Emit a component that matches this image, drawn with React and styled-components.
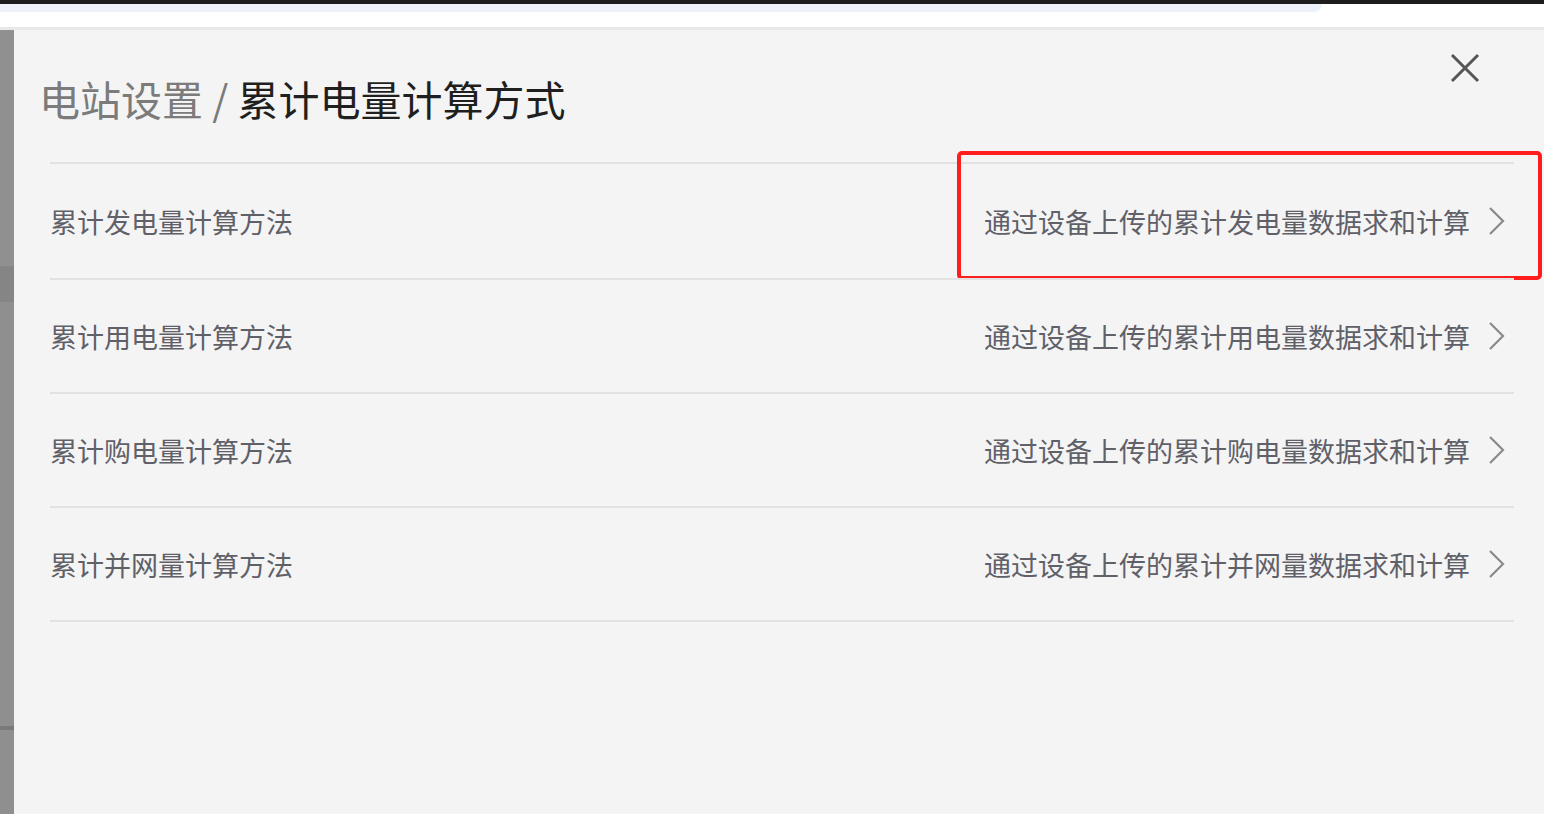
import React from "react";
import styled, { createGlobalStyle } from "styled-components";

const Global = createGlobalStyle`
    html, body {
        margin: 0;
        padding: 0;
        background: #ffffff;
        font-family: "Noto Sans CJK SC", "Noto Sans", sans-serif;
    }
`

const Page = styled.div`
    width: 1544px;
    height: 814px;
    display: flex;
    flex-direction: column;
    overflow: hidden;
`

const TopStrip = styled.div`
    height: 4px;
    background-color: #1d1d1d;
`

const Header = styled.div`
    height: 23px;
    background-color: #ffffff;
    border-bottom: 3px solid #e8e8e8;
`

const HeaderBand = styled.div`
    width: 1322px;
    height: 8px;
    background-color: #edf1f9;
    border-bottom-right-radius: 10px;
`

const Main = styled.div`
    flex: 1;
    display: flex;
`

const Rail = styled.div`
    width: 14px;
    display: flex;
    flex-direction: column;
    background-color: #8f8f8f;
`

const RailPart = styled.div`
    height: ${props => props.h}px;
    background-color: ${props => props.bg};
`

const Panel = styled.div`
    flex: 1;
    background-color: #f4f4f4;
    display: flex;
    flex-direction: column;
`

const TitleBar = styled.div`
    display: flex;
    justify-content: space-between;
    align-items: flex-start;
    padding: 23px 64px 0 25px;
`

const Title = styled.h2`
    margin: 21px 0 0;
    font-size: 41px;
    line-height: 48px;
    font-weight: 400;
    color: #1f1f1f;
`

const Crumb = styled.span`
    color: #7b7b7b;
`

const Close = styled.button`
    width: 30px;
    height: 30px;
    padding: 0;
    border: none;
    background: transparent;
    display: flex;
    align-items: center;
    justify-content: center;
`

const List = styled.div`
    margin: 40px 30px 0 36px;
    border-bottom: 2px solid #e2e2e2;
`

const Row = styled.div`
    position: relative;
    height: ${props => (props.$first ? 116 : 114)}px;
    box-sizing: border-box;
    border-top: 2px solid #e2e2e2;
    display: flex;
    align-items: center;
    justify-content: space-between;
`

const Label = styled.span`
    font-size: 27px;
    color: #5f6068;
`

const Value = styled.div`
    display: flex;
    align-items: center;
    gap: 16px;
    padding-right: 8px;
    font-size: 27px;
    color: #5f6068;
`

const Highlight = styled.div`
    position: absolute;
    left: 907px;
    right: -28px;
    top: -13px;
    bottom: -2px;
    border: 4px solid #ff1d1d;
    border-radius: 5px;
`

const rows = [
    { label: "累计发电量计算方法", value: "通过设备上传的累计发电量数据求和计算", marked: true },
    { label: "累计用电量计算方法", value: "通过设备上传的累计用电量数据求和计算" },
    { label: "累计购电量计算方法", value: "通过设备上传的累计购电量数据求和计算" },
    { label: "累计并网量计算方法", value: "通过设备上传的累计并网量数据求和计算" },
]

const Chevron = () => (
    <svg width="20" height="30" viewBox="0 0 20 30">
        <polyline points="4,2 17,15 4,28" fill="none" stroke="#8a8a8a" strokeWidth="2.2" />
    </svg>
)

const App = () => {
    return (
        <Page>
            <Global />
            <TopStrip />
            <Header>
                <HeaderBand />
            </Header>
            <Main>
                <Rail>
                    <RailPart h={236} bg="#909090" />
                    <RailPart h={36} bg="#858585" />
                    <RailPart h={424} bg="#8f8f8f" />
                    <RailPart h={4} bg="#7a7a7a" />
                    <RailPart h={84} bg="#8f8f8f" />
                </Rail>
                <Panel>
                    <TitleBar>
                        <Title>
                            <Crumb>电站设置 / </Crumb>累计电量计算方式
                        </Title>
                        <Close aria-label="close">
                            <svg width="30" height="30" viewBox="0 0 30 30">
                                <path d="M2 2 L28 28 M28 2 L2 28" stroke="#555" strokeWidth="3" fill="none" />
                            </svg>
                        </Close>
                    </TitleBar>
                    <List>
                        {rows.map((r, i) => (
                            <Row key={r.label} $first={i === 0}>
                                <Label>{r.label}</Label>
                                <Value>
                                    {r.value}
                                    <Chevron />
                                </Value>
                                {r.marked && <Highlight />}
                            </Row>
                        ))}
                    </List>
                </Panel>
            </Main>
        </Page>
    );
}

export default App
